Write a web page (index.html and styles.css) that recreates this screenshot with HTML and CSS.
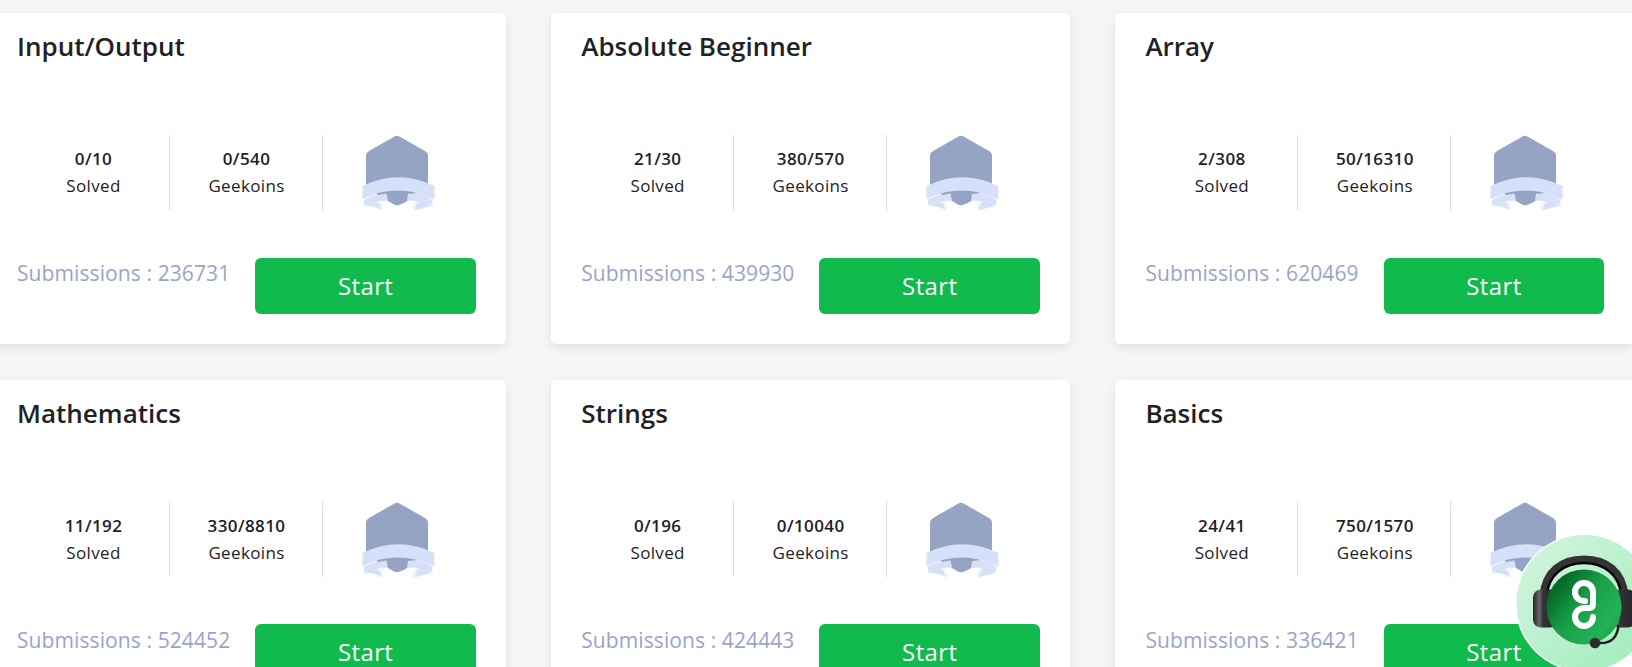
FILE: index.html
```
<!DOCTYPE html>
<html lang="en">
<head>
<meta charset="utf-8">
<title>Topics</title>
<link rel="stylesheet" href="styles.css">
</head>
<body>
<svg class="defs" width="0" height="0" aria-hidden="true">
  <symbol id="badge" viewBox="0 0 74 76">
    <path fill="#96a4c4" d="M33 1.700 Q36 0 39 1.700L64 16Q67 17.700 67 20.500V55L49 58Q46.500 65 39 69Q36 71 33 69Q26.500 65 23 58L5 55V20.500Q5 17.700 8 16Z"/>
    <path fill="#f4f7fe" d="M1 60L14 57 27 58 29 66 21 67 23 75 12 72 3 71ZM73 60L59 57 47 58 45 66 53 66 50 75 61 72 72 71Z"/>
    <path fill="#d6e0f8" d="M3 65Q12 59 27 58L29 66.500Q21 64 14 68Q8 71 3 69ZM71 65Q63 58 47 58L45 66.500Q53 64 60 68Q66 71 71 69ZM4 70Q11 67 18 68L21 75.500Q12 70 4 71ZM70 70Q63 66 56 68L53 75.500Q62 73 70 71Z"/>
    <path fill="#96a4c4" d="M15 58Q37 51 58 58L47 59 46 66Q43 68 39 69.500Q36 71 33 69.500L27 66 25.500 58.500 17 60Z"/>
    <path fill="#d6e0f8" d="M1.500 51Q37 33.500 73.500 51V64.500Q37 47 1.500 64Z"/>
  </symbol>
</svg>
<main class="grid" id="grid"></main>
<div class="chat">
<svg viewBox="0 0 138 138" width="138" height="138">
  <defs>
    <linearGradient id="bg" x1="0" y1="0" x2="1" y2="1"><stop offset="0" stop-color="#d7f5e0"/><stop offset="1" stop-color="#9cecb9"/></linearGradient>
    <linearGradient id="face" x1="0" y1=".1" x2="1" y2=".9"><stop offset="0" stop-color="#0d7a33"/><stop offset=".15" stop-color="#066a26"/><stop offset=".45" stop-color="#1a9c49"/><stop offset=".8" stop-color="#21b355"/><stop offset="1" stop-color="#159b44"/></linearGradient>
    <linearGradient id="ear" x1="0" x2="1"><stop offset="0" stop-color="#222"/><stop offset=".25" stop-color="#6a6a6a"/><stop offset=".4" stop-color="#333"/><stop offset="1" stop-color="#222"/></linearGradient>
  </defs>
  <circle cx="69" cy="69" r="69" fill="#fff"/>
  <circle cx="69.500" cy="69" r="68" fill="url(#bg)"/>
  <path d="M28 62C30 38 46 25 69 25S108 38 110 62" fill="none" stroke="#333" stroke-width="7"/>
  <path d="M32 60C34 41 49 29 69 29S104 41 106 60" fill="none" stroke="#050505" stroke-width="2.500"/>
  <rect x="18" y="55.500" width="25" height="38" rx="8" fill="url(#ear)"/>
  <rect x="95.500" y="55.500" width="25" height="38" rx="8" fill="url(#ear)"/>
  <circle cx="69" cy="73" r="37.500" fill="url(#face)"/>
  <path d="M70 67A9 9 0 1 1 78 58V70Q78 74 74 74H69A9 9 0 1 0 78 83" fill="none" stroke="#fff" stroke-width="6" stroke-linecap="round"/>
  <path d="M103.500 91Q102 110 84 109" fill="none" stroke="#222" stroke-width="2.500"/>
  <circle cx="80" cy="109" r="5.300" fill="#2c2c2c"/>
</svg>
</div>
<script src="cards.js"></script>
</body>
</html>
```
FILE: cards.js
```
const topics = [
  ["Input/Output", "0/10", "0/540", "236731"],
  ["Absolute Beginner", "21/30", "380/570", "439930"],
  ["Array", "2/308", "50/16310", "620469"],
  ["Mathematics", "11/192", "330/8810", "524452"],
  ["Strings", "0/196", "0/10040", "424443"],
  ["Basics", "24/41", "750/1570", "336421"]
];
document.getElementById("grid").innerHTML = topics.map(([title, solved, coins, subs]) => `
  <section class="card">
    <h2 class="title">${title}</h2>
    <div class="stats">
      <div class="stat"><b class="value">${solved}</b><span class="label">Solved</span></div>
      <div class="stat stat-last"><b class="value">${coins}</b><span class="label">Geekoins</span></div>
      <div class="award"><svg class="badge"><use href="#badge"/></svg></div>
    </div>
    <div class="footer">
      <span class="subs">Submissions : ${subs}</span>
      <button class="start">Start</button>
    </div>
  </section>`).join("");
```
FILE: styles.css
```
* { box-sizing: border-box; }
html, body { height: 100%; }
body {
  margin: 0;
  overflow: hidden;
  background: #f5f5f8;
  color: #1e2226;
  font-family: "Open Sans", "Noto Sans", sans-serif;
}
.defs { display: block; }
.grid {
  display: grid;
  grid-template-columns: repeat(3, 519px);
  grid-auto-rows: 331px;
  gap: 35.5px 45.2px;
  width: 1648px;
  margin: 13px 0 0 -13px;
}
.card {
  display: flex;
  flex-direction: column;
  padding: 16px 30px 30px;
  border-radius: 5px;
  background: #fff;
  box-shadow: 0 4px 10px rgba(0, 0, 0, .08);
}
.title {
  margin: 0;
  height: 105.8px;
  font-size: 26px;
  line-height: 34px;
  font-weight: 600;
}
.stats {
  display: grid;
  grid-template-columns: repeat(3, 153px);
  height: 76px;
}
.stat {
  display: flex;
  flex-direction: column;
  align-items: center;
  height: 75px;
  padding: 10.4px 0 0 1px;
  border-right: 1px solid #d2ddf8;
  font-size: 17px;
  line-height: 27px;
}
.stat-last { height: 76px; }
.value {
  font-weight: 600;
  letter-spacing: .4px;
}
.label { letter-spacing: .35px; }
.award { padding: .5px 0 0 38px; }
.badge { display: block; width: 74px; height: 76px; }
.footer {
  display: flex;
  justify-content: space-between;
  margin-top: 46.8px;
}
.subs {
  margin-top: -.2px;
  color: #98a5c8;
  font-size: 21px;
  line-height: 32px;
  letter-spacing: .1px;
  white-space: nowrap;
}
.start {
  width: 220.8px;
  height: 56px;
  padding: 0 0 1px;
  border: 0;
  border-radius: 6px;
  background: #10ba4c;
  color: #fff;
  font: 400 24px "Open Sans", sans-serif;
  letter-spacing: .4px;
}
.chat {
  position: absolute;
  left: 1515px;
  top: 534px;
  width: 117px;
  height: 133px;
  overflow: hidden;
}
```
